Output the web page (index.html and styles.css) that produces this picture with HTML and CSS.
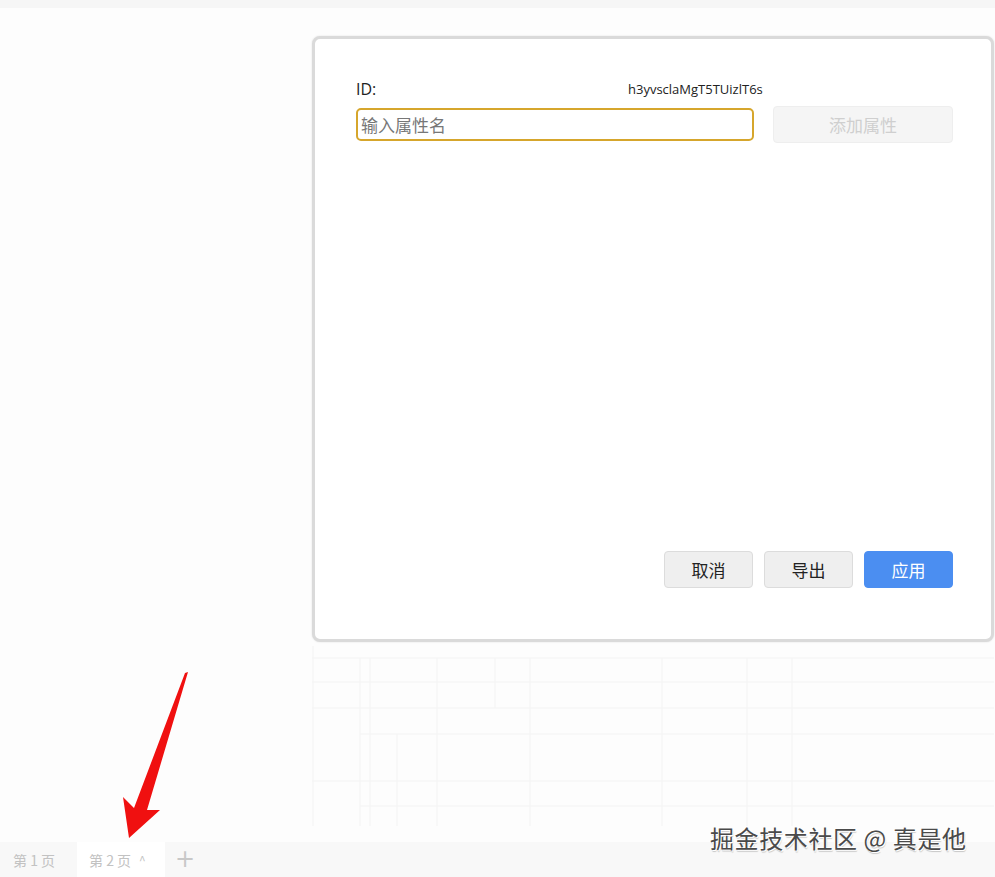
FILE: index.html
```html
<!DOCTYPE html>
<html lang="zh-CN">
<head>
    <meta charset="UTF-8">
    <meta name="viewport" content="width=device-width, initial-scale=1.0">
    <title>属性编辑</title>
    <link rel="stylesheet" href="styles.css">
</head>
<body>

<div class="top-strip"></div>

<div class="stage">
    <!-- Attribute dialog -->
    <div class="dialog">
        <div class="id-row">
            <span class="id-label">ID:</span>
            <span class="id-value">h3yvsclaMgT5TUizlT6s</span>
        </div>
        <div class="add-row">
            <input class="attr-input" type="text" placeholder="输入属性名">
            <button class="btn btn-add" disabled>添加属性</button>
        </div>
        <div class="dialog-footer">
            <button class="btn btn-plain">取消</button>
            <button class="btn btn-plain">导出</button>
            <button class="btn btn-primary">应用</button>
        </div>
    </div>

    <!-- faded table behind the dialog -->
    <div class="ghost-grid">
        <svg width="682" height="186" viewBox="0 0 682 186">
            <g stroke="#f6f6f6" stroke-width="1.5" fill="none">
                <line x1="0" y1="12" x2="682" y2="12"/>
                <line x1="0" y1="36" x2="682" y2="36"/>
                <line x1="0" y1="62" x2="682" y2="62"/>
                <line x1="48" y1="88" x2="682" y2="88"/>
                <line x1="0" y1="135" x2="682" y2="135"/>
                <line x1="48" y1="160" x2="682" y2="160"/>
                <line x1="1" y1="0" x2="1" y2="180"/>
                <line x1="48" y1="12" x2="48" y2="180"/>
                <line x1="58" y1="12" x2="58" y2="180"/>
                <line x1="85" y1="88" x2="85" y2="180"/>
                <line x1="125" y1="12" x2="125" y2="180"/>
                <line x1="183" y1="12" x2="183" y2="62"/>
                <line x1="218" y1="12" x2="218" y2="180"/>
                <line x1="350" y1="12" x2="350" y2="180"/>
                <line x1="435" y1="12" x2="435" y2="180"/>
                <line x1="480" y1="12" x2="480" y2="180"/>
            </g>
        </svg>
    </div>
</div>

<div class="page-tabs">
    <div class="tab">第 1 页</div>
    <div class="tab tab-active">第 2 页 <span class="caret">^</span></div>
    <div class="tab tab-add">+</div>
</div>

<!-- annotation arrow -->
<svg class="arrow" width="995" height="877" viewBox="0 0 995 877">
    <polygon fill="#f01010" points="188,672 147,810 160,810 129,838 123,797 134,808 185,673"/>
</svg>

<div class="watermark">掘金技术社区 @ 真是他</div>

</body>
</html>
```

FILE: styles.css
```css
/* Page base */
html, body {
    margin: 0;
    padding: 0;
}

body {
    width: 995px;
    height: 877px;
    overflow: hidden;
    background-color: #fdfdfd;
    font-family: "Open Sans", "Noto Sans CJK SC", sans-serif;
    color: #222;
    display: flex;
    flex-direction: column;
    position: relative;
}

.top-strip {
    height: 8px;
    background-color: #f6f6f6;
}

.stage {
    padding: 28px 1px 0 312px;
}

/* Dialog box */
.dialog {
    box-sizing: border-box;
    width: 682px;
    height: 606px;
    border: 3px solid #dadada;
    border-radius: 8px;
    background-color: #fff;
    box-shadow: 0 0 2px rgba(0, 0, 0, 0.12);
    padding: 40px 38px 51px 41px;
    display: flex;
    flex-direction: column;
}

.id-row {
    display: flex;
    align-items: center;
    height: 20px;
}

.id-label {
    width: 272px;
    font-size: 16px;
    color: #222;
}

.id-value {
    font-size: 13px;
    color: #222;
}

.add-row {
    display: flex;
    align-items: center;
    justify-content: space-between;
    margin-top: 7px;
}

.attr-input {
    box-sizing: border-box;
    width: 398px;
    height: 33px;
    border: 2px solid #d6a62c;
    border-radius: 5px;
    padding: 0 3px;
    font-family: "Noto Sans CJK SC", sans-serif;
    font-size: 17px;
    outline: none;
}

.attr-input::placeholder {
    color: #777;
}

/* Buttons */
.btn {
    box-sizing: border-box;
    font-family: "Noto Sans CJK SC", sans-serif;
    font-size: 17px;
    border-radius: 4px;
    cursor: pointer;
}

.btn-add {
    width: 180px;
    height: 37px;
    background-color: #f5f5f5;
    border: 1px solid #eeeeee;
    color: #cfcfcf;
    cursor: default;
}

.dialog-footer {
    margin-top: auto;
    display: flex;
    justify-content: flex-end;
    gap: 11px;
}

.btn-plain {
    width: 89px;
    height: 37px;
    background-color: #efefef;
    border: 1px solid #dcdcdc;
    color: #222;
}

.btn-primary {
    width: 89px;
    height: 37px;
    background-color: #4b8ef1;
    border: 1px solid #4b8ef1;
    color: #fff;
}

/* faded table area */
.ghost-grid {
    margin-top: 4px;
    height: 186px;
    line-height: 0;
}

/* Page tabs at the bottom */
.page-tabs {
    margin-top: auto;
    height: 35px;
    background-color: #f8f8f8;
    display: flex;
    align-items: stretch;
    font-family: "Noto Sans CJK SC", sans-serif;
    font-size: 14px;
    color: #c2c2c2;
}

.tab {
    display: flex;
    align-items: center;
    padding: 0 18px 0 13px;
}

.tab-active {
    background-color: #fff;
    margin-left: 4px;
    padding: 0 10px 0 12px;
    width: 66px;
}

.caret {
    margin-left: 8px;
    font-size: 12px;
}

.tab-add {
    font-family: "DejaVu Sans", sans-serif;
    font-size: 24px;
    line-height: 1;
    color: #c8c8c8;
    padding: 0 12px 2px 10px;
}

/* Overlays */
.arrow {
    position: absolute;
    top: 0;
    left: 0;
    pointer-events: none;
}

.watermark {
    position: absolute;
    left: 710px;
    top: 820px;
    font-family: "Noto Sans CJK SC", sans-serif;
    font-size: 24px;
    color: #4a4a4a;
    letter-spacing: 0.6px;
    text-shadow: 1px 1px 0 #fff, -1px -1px 0 #fff, 1px 2px 1px rgba(0, 0, 0, 0.2);
}
```
